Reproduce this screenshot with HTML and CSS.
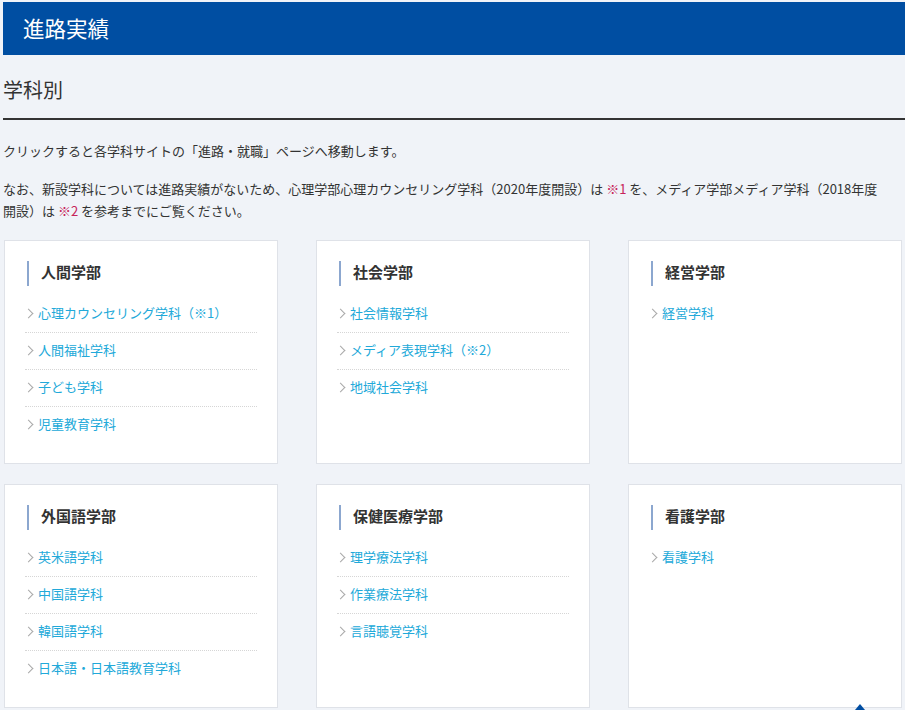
FILE: index.html
```html
<!DOCTYPE html>
<html lang="ja">
<head>
<meta charset="utf-8">
<title>進路実績</title>
<link rel="stylesheet" href="styles.css">
</head>
<body>
<div class="page">
  <header class="page-header">
    <h1 class="page-title">進路実績</h1>
  </header>
  <h2 class="section-title">学科別</h2>
  <p class="lead">クリックすると各学科サイトの「進路・就職」ページへ移動します。</p>
  <p class="lead">なお、新設学科については進路実績がないため、心理学部心理カウンセリング学科（2020年度開設）は <span class="note">※1</span> を、メディア学部メディア学科（2018年度<br>開設）は <span class="note">※2</span> を参考までにご覧ください。</p>

  <div class="faculty-grid">
    <section class="card">
      <h3 class="card-title">人間学部</h3>
      <ul class="dept-list">
        <li><a href="#">心理カウンセリング学科（※1）</a></li>
        <li><a href="#">人間福祉学科</a></li>
        <li><a href="#">子ども学科</a></li>
        <li><a href="#">児童教育学科</a></li>
      </ul>
    </section>
    <section class="card">
      <h3 class="card-title">社会学部</h3>
      <ul class="dept-list">
        <li><a href="#">社会情報学科</a></li>
        <li><a href="#">メディア表現学科（※2）</a></li>
        <li><a href="#">地域社会学科</a></li>
      </ul>
    </section>
    <section class="card">
      <h3 class="card-title">経営学部</h3>
      <ul class="dept-list">
        <li><a href="#">経営学科</a></li>
      </ul>
    </section>
    <section class="card">
      <h3 class="card-title">外国語学部</h3>
      <ul class="dept-list">
        <li><a href="#">英米語学科</a></li>
        <li><a href="#">中国語学科</a></li>
        <li><a href="#">韓国語学科</a></li>
        <li><a href="#">日本語・日本語教育学科</a></li>
      </ul>
    </section>
    <section class="card">
      <h3 class="card-title">保健医療学部</h3>
      <ul class="dept-list">
        <li><a href="#">理学療法学科</a></li>
        <li><a href="#">作業療法学科</a></li>
        <li><a href="#">言語聴覚学科</a></li>
      </ul>
    </section>
    <section class="card">
      <h3 class="card-title">看護学部</h3>
      <ul class="dept-list">
        <li><a href="#">看護学科</a></li>
      </ul>
    </section>
  </div>
</div>
<a class="pagetop" href="#" aria-label="ページトップへ"></a>
</body>
</html>
```

FILE: styles.css
```css
html, body {
  margin: 0;
  padding: 0;
  background: #f0f3f8;
}
body {
  font-family: "Noto Sans CJK JP", "Noto Sans", sans-serif;
  color: #333;
  font-size: 13px;
  overflow: hidden;
}
.page {
  padding: 2px 0 0 3px;
}
.page-header {
  background: #004ea2;
  height: 53px;
  display: flex;
  align-items: center;
  padding-left: 20px;
}
.page-title {
  margin: 0 0 2px;
  color: #fff;
  font-size: 21.5px;
  font-weight: 400;
  line-height: 1;
}
.section-title {
  margin: 20px 0 0;
  font-size: 20px;
  font-weight: 400;
  line-height: 30px;
  padding-bottom: 13px;
  border-bottom: 2px solid #333;
}
.lead {
  margin: 20px 0 0;
  line-height: 22px;
  font-size: 13px;
}
.lead + .lead {
  margin-top: 16px;
}
.note {
  color: #c7245a;
}
.faculty-grid {
  margin: 18px 3px 0 1px;
  display: grid;
  grid-template-columns: repeat(3, 1fr);
  column-gap: 38px;
  row-gap: 20px;
}
.card {
  background: #fff;
  border: 1px solid #dfe2e8;
  padding: 20px;
}
.card-title {
  margin: 0 0 0 2px;
  box-sizing: border-box;
  height: 25px;
  border-left: 2px solid #8ca7cf;
  padding: 0 0 4px 12px;
  font-size: 15px;
  font-weight: 700;
  line-height: 21px;
  color: #333;
}
.dept-list {
  list-style: none;
  margin: 10px 0 0;
  padding: 0;
}
.dept-list li {
  padding: 8px 0 10px;
  line-height: 18px;
  border-bottom: 1px dotted #d6d6d6;
}
.dept-list li:last-child {
  border-bottom: none;
}
.dept-list a {
  display: flex;
  align-items: center;
  color: #22a9d9;
  text-decoration: none;
  font-size: 13px;
}
.dept-list a::before {
  content: "";
  flex: none;
  width: 6px;
  height: 6px;
  border-top: 1px solid #a9a9a9;
  border-right: 1px solid #a9a9a9;
  transform: rotate(45deg);
  margin: 0 6px 0 0;
}
.pagetop {
  position: fixed;
  left: 855px;
  top: 704px;
  width: 0;
  height: 0;
  border-left: 5px solid transparent;
  border-right: 5px solid transparent;
  border-bottom: 6px solid #004ea2;
}
```
